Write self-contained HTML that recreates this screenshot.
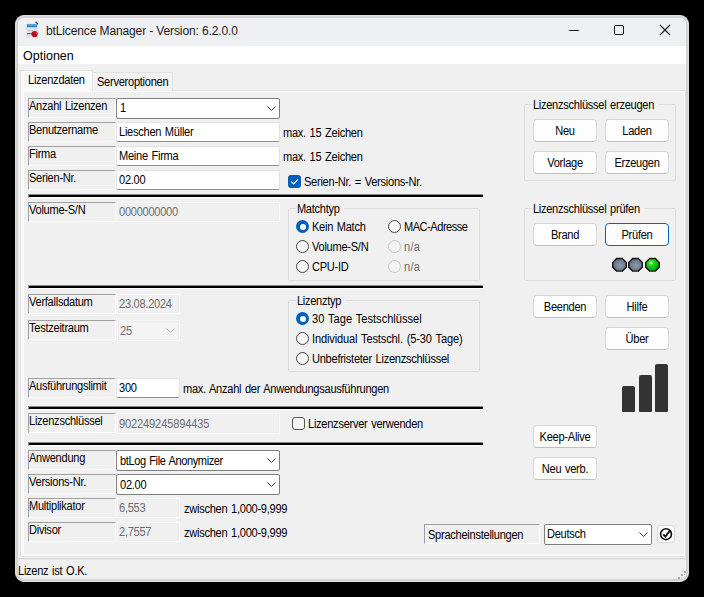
<!DOCTYPE html>
<html><head><meta charset="utf-8">
<style>
*{box-sizing:border-box;margin:0;padding:0}
html,body{width:704px;height:597px;background:#000;overflow:hidden;font-family:"Liberation Sans",sans-serif;font-size:11px;color:#000;position:relative}
div,svg{position:absolute}
.t{white-space:nowrap;line-height:13px;font-size:12.5px;letter-spacing:-0.3px;word-spacing:1px;transform:scaleX(0.885);transform-origin:0 0}
.lbl{width:88px;height:20px;border-left:1px solid #a0a0a0;border-top:1px solid #a0a0a0;border-right:1px solid #fff;border-bottom:1px solid #fff}
.tb{background:#fff;border:1px solid #e2e2e2;border-bottom:1px solid #8d8d8d;border-radius:2px}
.tbd{background:#f0f0f0;border:1px solid #f9f9f9;box-shadow:inset 0 0 0 1px #ececec}
.cb{background:#fff;border:1px solid #7f7f7f;border-radius:2px}
.chev{width:9px;height:5px}
.btn{width:64px;height:23px;background:#fdfdfd;border:1px solid #d6d6d6;border-bottom-color:#c0c0c0;border-radius:4px}
.bt{margin-top:1px;width:64px;text-align:center;white-space:nowrap;line-height:13px;font-size:12.5px;letter-spacing:-0.3px;word-spacing:1px;transform:scaleX(0.885);transform-origin:50% 0}
.hr{left:28px;width:455px;height:4px;border-top:1px solid #8a8a8a;border-left:1px solid #8a8a8a;border-bottom:1px solid #fff;background:#000}
.grp{border:1px solid #dcdcdc;border-radius:2px}
.gl{background:#f0f0f0;padding:0 5px 0 1px;white-space:nowrap;line-height:13px;font-size:12.5px;letter-spacing:-0.3px;word-spacing:1px;transform:scaleX(0.885);transform-origin:0 0}
.rad{width:13px;height:13px;border:1px solid #454545;border-radius:50%;background:#f7f7f7}
.rad.on{border:none;background:#005fb8}
.rad.on::after{content:"";position:absolute;left:3.5px;top:3.5px;width:6px;height:6px;border-radius:50%;background:#fff}
.rad.dis{border-color:#c8c8c8;background:#f3f3f3}
.rt{white-space:nowrap;line-height:13px;font-size:12.5px;letter-spacing:-0.3px;word-spacing:1px;transform:scaleX(0.885);transform-origin:0 0}
.dis{color:#6d6d6d}
</style></head><body>
<!-- window frame -->
<div style="left:15px;top:15px;width:674px;height:567px;background:#f0f0f0;border:1px solid #dfdfdf;border-radius:9px;overflow:hidden">
  <div style="left:0;top:0;width:672px;height:565px;border:2px solid #d3d3d3;border-radius:8px"></div>
  <div style="left:2px;top:2px;width:668px;height:28px;background:#eff0f3;border-radius:6px 6px 0 0"></div>
  <div style="left:2px;top:30px;width:668px;height:18px;background:#fff"></div>
</div>
<!-- title -->
<svg style="left:25px;top:21px" width="15" height="18" viewBox="0 0 15 18">
  <defs><linearGradient id="bl" x1="0" y1="0" x2="0" y2="1"><stop offset="0" stop-color="#6cb0ea"/><stop offset="1" stop-color="#1f78c8"/></linearGradient></defs>
  <rect x="1" y="2.5" width="12" height="14.5" fill="#e2e2e2"/>
  <rect x="2" y="3" width="10" height="3.2" fill="url(#bl)"/>
  <rect x="2" y="9" width="6" height="1" fill="#c4c8cc"/>
  <rect x="2" y="12" width="5" height="1.2" fill="#5a7596"/>
  <circle cx="9.6" cy="13" r="3.1" fill="#b5111a"/>
  <circle cx="11.5" cy="12" r="1" fill="#d8402a"/>
  <path d="M10.6 0.8 L13 3.2" stroke="#444" stroke-width="1.3"/>
</svg>
<div class="t" style="left:46px;top:25px;color:#1c1c1c;font-size:12px;letter-spacing:-0.12px;word-spacing:0;transform:none">btLicence Manager - Version: 6.2.0.0</div>
<div style="left:569px;top:30px;width:10px;height:1px;background:#1a1a1a"></div>
<div style="left:614px;top:25px;width:10px;height:10px;border:1px solid #1a1a1a;border-radius:2px"></div>
<svg style="left:659px;top:24px" width="12" height="12" viewBox="0 0 12 12"><path d="M1 1 L11 11 M11 1 L1 11" stroke="#1a1a1a" stroke-width="1.1"/></svg>
<div class="t" style="left:23px;top:50px;font-size:12.5px;letter-spacing:0;word-spacing:0;transform:none">Optionen</div>

<!-- tab control -->
<div style="left:20px;top:90px;width:666px;height:467px;border:1px solid #e2e2e2;background:#f9f9f9"></div>
<div style="left:24px;top:92px;width:660px;height:462px;background:#f0f0f0"></div>
<div style="left:92px;top:72px;width:81px;height:19px;border:1px solid #e2e2e2;border-bottom:none;background:#f2f2f2"></div>
<div style="left:20px;top:70px;width:73px;height:22px;border:1px solid #e2e2e2;border-bottom:none;background:#f9f9f9"></div>
<div class="t" style="left:28px;top:74px">Lizenzdaten</div>
<div class="t" style="left:97px;top:76px">Serveroptionen</div>

<!-- row 1 -->
<div class="lbl" style="left:28px;top:98px"></div><div class="t" style="left:29px;top:100px">Anzahl Lizenzen</div>
<div class="cb" style="left:116px;top:98px;width:164px;height:21px"></div><div class="t" style="left:120px;top:102px">1</div>
<svg class="chev" style="left:267px;top:106px" viewBox="0 0 9 5"><path d="M0.5 0.5 L4.5 4.5 L8.5 0.5" fill="none" stroke="#333" stroke-width="1"/></svg>

<div class="lbl" style="left:28px;top:122px"></div><div class="t" style="left:29px;top:124px">Benutzername</div>
<div class="tb" style="left:116px;top:122px;width:164px;height:20px"></div><div class="t" style="left:119px;top:126px">Lieschen Müller</div>
<div class="t" style="left:283px;top:127px">max. 15 Zeichen</div>

<div class="lbl" style="left:28px;top:146px"></div><div class="t" style="left:29px;top:148px">Firma</div>
<div class="tb" style="left:116px;top:146px;width:164px;height:20px"></div><div class="t" style="left:119px;top:150px">Meine Firma</div>
<div class="t" style="left:283px;top:151px">max. 15 Zeichen</div>

<div class="lbl" style="left:28px;top:170px"></div><div class="t" style="left:29px;top:172px">Serien-Nr.</div>
<div class="tb" style="left:116px;top:170px;width:164px;height:20px"></div><div class="t" style="left:119px;top:174px">02.00</div>
<div style="left:288px;top:175px;width:13px;height:13px;background:#005fb8;border-radius:3px"></div>
<svg style="left:288px;top:175px" width="13" height="13" viewBox="0 0 13 13"><path d="M3.2 6.6 L5.6 9 L10 4.3" fill="none" stroke="#fff" stroke-width="1.1"/></svg>
<div class="t" style="left:304px;top:176px">Serien-Nr. = Versions-Nr.</div>

<div class="hr" style="top:194px"></div>

<!-- volume -->
<div class="lbl" style="left:28px;top:202px"></div><div class="t" style="left:29px;top:204px">Volume-S/N</div>
<div class="tbd" style="left:117px;top:202px;width:163px;height:20px"></div><div class="t dis" style="left:119px;top:206px">0000000000</div>

<div class="grp" style="left:288px;top:208px;width:192px;height:73px"></div>
<div class="gl" style="left:296px;top:203px">Matchtyp</div>
<div class="rad on" style="left:296px;top:220px"></div><div class="rt" style="left:312px;top:221px">Kein Match</div>
<div class="rad" style="left:388px;top:220px"></div><div class="rt" style="left:404px;top:221px;letter-spacing:-0.55px">MAC-Adresse</div>
<div class="rad" style="left:296px;top:240px"></div><div class="rt" style="left:312px;top:241px">Volume-S/N</div>
<div class="rad dis" style="left:388px;top:240px"></div><div class="rt dis" style="left:404px;top:241px;letter-spacing:0.3px">n/a</div>
<div class="rad" style="left:296px;top:260px"></div><div class="rt" style="left:312px;top:261px">CPU-ID</div>
<div class="rad dis" style="left:388px;top:260px"></div><div class="rt dis" style="left:404px;top:261px;letter-spacing:0.3px">n/a</div>

<div class="hr" style="top:285px"></div>

<div class="lbl" style="left:28px;top:294px"></div><div class="t" style="left:29px;top:296px">Verfallsdatum</div>
<div class="tbd" style="left:117px;top:294px;width:63px;height:20px"></div><div class="t dis" style="left:119px;top:298px">23.08.2024</div>
<div class="lbl" style="left:28px;top:320px"></div><div class="t" style="left:29px;top:322px">Testzeitraum</div>
<div class="tbd" style="left:117px;top:320px;width:63px;height:21px;background:#f4f4f4"></div><div class="t dis" style="left:120px;top:325px">25</div>
<svg class="chev" style="left:166px;top:328px" viewBox="0 0 9 5"><path d="M0.5 0.5 L4.5 4.5 L8.5 0.5" fill="none" stroke="#b0b0b0" stroke-width="1"/></svg>

<div class="grp" style="left:288px;top:300px;width:192px;height:72px"></div>
<div class="gl" style="left:296px;top:295px">Lizenztyp</div>
<div class="rad on" style="left:296px;top:312px"></div><div class="rt" style="left:312px;top:313px;letter-spacing:0px">30 Tage Testschlüssel</div>
<div class="rad" style="left:296px;top:332px"></div><div class="rt" style="left:312px;top:333px;letter-spacing:-0.15px">Individual Testschl. (5-30 Tage)</div>
<div class="rad" style="left:296px;top:352px"></div><div class="rt" style="left:312px;top:353px;letter-spacing:-0.3px">Unbefristeter Lizenzschlüssel</div>

<div class="lbl" style="left:28px;top:378px"></div><div class="t" style="left:29px;top:380px">Ausführungslimit</div>
<div class="tb" style="left:116px;top:378px;width:64px;height:20px"></div><div class="t" style="left:119px;top:382px">300</div>
<div class="t" style="left:183px;top:383px">max. Anzahl der Anwendungsausführungen</div>

<div class="hr" style="top:406px"></div>

<div class="lbl" style="left:28px;top:413px"></div><div class="t" style="left:29px;top:415px">Lizenzschlüssel</div>
<div class="tbd" style="left:117px;top:413px;width:163px;height:21px"></div><div class="t dis" style="left:119px;top:418px;letter-spacing:-0.15px">902249245894435</div>
<div style="left:292px;top:417px;width:13px;height:13px;border:1px solid #555;border-radius:3px;background:#f5f5f5"></div>
<div class="t" style="left:308px;top:418px">Lizenzserver verwenden</div>

<div class="hr" style="top:442px"></div>

<div class="lbl" style="left:28px;top:450px"></div><div class="t" style="left:29px;top:452px">Anwendung</div>
<div class="cb" style="left:116px;top:450px;width:164px;height:21px"></div><div class="t" style="left:120px;top:455px;letter-spacing:-0.45px">btLog File Anonymizer</div>
<svg class="chev" style="left:267px;top:458px" viewBox="0 0 9 5"><path d="M0.5 0.5 L4.5 4.5 L8.5 0.5" fill="none" stroke="#333" stroke-width="1"/></svg>
<div class="lbl" style="left:28px;top:474px"></div><div class="t" style="left:29px;top:476px">Versions-Nr.</div>
<div class="cb" style="left:116px;top:474px;width:164px;height:21px"></div><div class="t" style="left:120px;top:479px">02.00</div>
<svg class="chev" style="left:267px;top:482px" viewBox="0 0 9 5"><path d="M0.5 0.5 L4.5 4.5 L8.5 0.5" fill="none" stroke="#333" stroke-width="1"/></svg>
<div class="lbl" style="left:28px;top:498px"></div><div class="t" style="left:29px;top:500px">Multiplikator</div>
<div class="tbd" style="left:117px;top:498px;width:63px;height:20px"></div><div class="t dis" style="left:119px;top:502px">6,553</div>
<div class="t" style="left:184px;top:503px">zwischen 1,000-9,999</div>
<div class="lbl" style="left:28px;top:522px"></div><div class="t" style="left:29px;top:524px">Divisor</div>
<div class="tbd" style="left:117px;top:522px;width:63px;height:20px"></div><div class="t dis" style="left:119px;top:526px">2,7557</div>
<div class="t" style="left:184px;top:527px">zwischen 1,000-9,999</div>

<!-- right column -->
<div class="grp" style="left:524px;top:104px;width:152px;height:77px"></div>
<div class="gl" style="left:532px;top:99px">Lizenzschlüssel erzeugen</div>
<div class="btn" style="left:533px;top:119px"></div><div class="bt" style="left:533px;top:124px">Neu</div>
<div class="btn" style="left:605px;top:119px"></div><div class="bt" style="left:605px;top:124px">Laden</div>
<div class="btn" style="left:533px;top:151px"></div><div class="bt" style="left:533px;top:156px">Vorlage</div>
<div class="btn" style="left:605px;top:151px"></div><div class="bt" style="left:605px;top:156px">Erzeugen</div>

<div class="grp" style="left:524px;top:208px;width:152px;height:73px"></div>
<div class="gl" style="left:532px;top:203px">Lizenzschlüssel prüfen</div>
<div class="btn" style="left:533px;top:223px"></div><div class="bt" style="left:533px;top:228px">Brand</div>
<div class="btn" style="left:605px;top:223px;border:1px solid #0067c0"></div><div class="bt" style="left:605px;top:228px">Prüfen</div>

<svg style="left:611px;top:257px" width="50" height="16" viewBox="0 0 50 16">
  <defs>
    <radialGradient id="gg" cx="0.55" cy="0.55" r="0.65"><stop offset="0" stop-color="#8f9cb0"/><stop offset="0.7" stop-color="#6b7684"/><stop offset="1" stop-color="#4a525c"/></radialGradient>
    <radialGradient id="gr" cx="0.4" cy="0.35" r="0.65"><stop offset="0" stop-color="#e0ffe0"/><stop offset="0.25" stop-color="#20e020"/><stop offset="1" stop-color="#00a000"/></radialGradient>
  </defs>
  <polygon points="5.7,1.5 11.3,1.5 15.3,5.5 15.3,10.1 11.3,14.1 5.7,14.1 1.7,10.1 1.7,5.5" fill="url(#gg)" stroke="#151515" stroke-width="1.4"/>
  <polygon points="21.7,1.5 27.3,1.5 31.3,5.5 31.3,10.1 27.3,14.1 21.7,14.1 17.7,10.1 17.7,5.5" fill="url(#gg)" stroke="#151515" stroke-width="1.4"/>
  <polygon points="38.7,1.5 44.3,1.5 48.3,5.5 48.3,10.1 44.3,14.1 38.7,14.1 34.7,10.1 34.7,5.5" fill="url(#gr)" stroke="#151515" stroke-width="1.4"/>
</svg>

<div class="btn" style="left:533px;top:295px"></div><div class="bt" style="left:533px;top:300px">Beenden</div>
<div class="btn" style="left:605px;top:295px"></div><div class="bt" style="left:605px;top:300px">Hilfe</div>
<div class="btn" style="left:605px;top:327px"></div><div class="bt" style="left:605px;top:332px">Über</div>

<div style="left:622px;top:386px;width:13px;height:26px;background:#333;border-radius:2px 2px 1px 1px"></div>
<div style="left:639px;top:375px;width:13px;height:37px;background:#333;border-radius:2px 2px 1px 1px"></div>
<div style="left:655px;top:364px;width:13px;height:48px;background:#333;border-radius:2px 2px 1px 1px"></div>

<div class="btn" style="left:533px;top:425px"></div><div class="bt" style="left:533px;top:430px">Keep-Alive</div>
<div class="btn" style="left:533px;top:457px"></div><div class="bt" style="left:533px;top:462px">Neu verb.</div>

<div class="lbl" style="left:424px;top:524px;width:116px"></div><div class="t" style="left:428px;top:529px">Spracheinstellungen</div>
<div class="cb" style="left:544px;top:524px;width:108px;height:21px"></div><div class="t" style="left:547px;top:528px">Deutsch</div>
<svg class="chev" style="left:639px;top:532px" viewBox="0 0 9 5"><path d="M0.5 0.5 L4.5 4.5 L8.5 0.5" fill="none" stroke="#333" stroke-width="1"/></svg>
<div style="left:657px;top:525px;width:18px;height:18px;background:#fbfbfb;border:1px solid #d6d6d6;border-radius:3px"></div>
<svg style="left:659px;top:527px" width="14" height="14" viewBox="0 0 14 14"><circle cx="7" cy="7.2" r="5.4" fill="#fff" stroke="#111" stroke-width="1.6"/><path d="M4.2 7.3 L6.4 9.6 L11.3 3.2" fill="none" stroke="#111" stroke-width="1.9"/></svg>

<!-- status bar -->
<div style="left:18px;top:558px;width:668px;height:1px;background:#d9d9d9"></div><div style="left:18px;top:559px;width:668px;height:1px;background:#e6e6e6"></div>
<div class="t" style="left:18px;top:565px">Lizenz ist O.K.</div>
<div style="left:684px;top:571px;width:2px;height:2px;background:#a8a8a8"></div>
<div style="left:681px;top:574px;width:2px;height:2px;background:#a8a8a8"></div>
<div style="left:678px;top:577px;width:2px;height:2px;background:#a8a8a8"></div>
<div style="left:684px;top:574px;width:1px;height:1px;background:#c4c4c4"></div>
<div style="left:681px;top:577px;width:1px;height:1px;background:#c4c4c4"></div>
</body></html>
